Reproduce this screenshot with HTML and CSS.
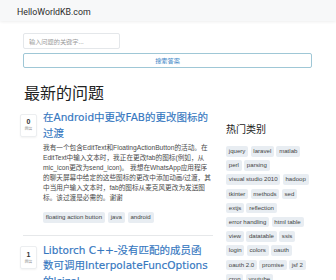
FILE: index.html
```html
<!DOCTYPE html>
<html lang="zh">
<head>
<meta charset="utf-8">
<title>HelloWorldKB.com</title>
<link rel="stylesheet" href="styles.css">
</head>
<body>
<nav class="navbar"><a class="brand" href="#">HelloWorldKB.com</a></nav>
<div class="container">
  <form class="search">
    <input class="search-input" type="text" placeholder="输入问题的关键字...">
    <button class="search-btn" type="button">搜索答案</button>
  </form>
  <h2 class="page-title">最新的问题</h2>
  <div class="layout">
    <main class="questions">
      <article class="question">
        <div class="votes"><span class="count">0</span><span class="label">回答</span></div>
        <div class="q-body">
          <a class="q-title" href="#">在Android中更改FAB的更改图标的过渡</a>
          <p class="excerpt">我有一个包含EditText和FloatingActionButton的活动。在EditText中输入文本时，我正在更改fab的图标(例如，从mic_icon更改为send_icon)。 我想在WhatsApp应用程序的聊天屏幕中给定的这些图标的更改中添加动画/过渡，其中当用户输入文本时，fab的图标从麦克风更改为发送图标。该过渡是必需的。谢谢</p>
          <div class="tags">
            <span class="tag">floating action button</span>
            <span class="tag">java</span>
            <span class="tag">android</span>
          </div>
        </div>
      </article>
      <hr class="sep">
      <article class="question">
        <div class="votes"><span class="count">1</span><span class="label">回答</span></div>
        <div class="q-body">
          <a class="q-title" href="#">Libtorch C++-没有匹配的成员函<br>数可调用InterpolateFuncOptions的'size'</a>
        </div>
      </article>
    </main>
    <aside class="sidebar">
      <h3 class="side-title">热门类别</h3>
      <div class="tags side-tags">
        <span class="tag">jquery</span><span class="tag">laravel</span><span class="tag">matlab</span>
        <span class="tag">perl</span><span class="tag">parsing</span>
        <span class="tag">visual studio 2010</span><span class="tag">hadoop</span>
        <span class="tag">tkinter</span><span class="tag">methods</span><span class="tag">sed</span>
        <span class="tag">extjs</span><span class="tag">reflection</span>
        <span class="tag">error handling</span><span class="tag">html table</span>
        <span class="tag">view</span><span class="tag">datatable</span><span class="tag">ssis</span>
        <span class="tag">login</span><span class="tag">colors</span><span class="tag">oauth</span>
        <span class="tag">oauth 2.0</span><span class="tag">promise</span><span class="tag">jsf 2</span>
        <span class="tag">cron</span><span class="tag">youtube</span><span class="tag">react router</span>
      </div>
    </aside>
  </div>
</div>
</body>
</html>
```

FILE: styles.css
```css
* { box-sizing: border-box; }

html, body {
  margin: 0;
  padding: 0;
  background: #fff;
  overflow: hidden;
}

body {
  font-family: "Liberation Sans", "Noto Sans CJK SC", sans-serif;
  color: #333;
}

.navbar {
  height: 21px;
  background: #f7f8f9;
  box-shadow: 0 1px 3px rgba(0, 0, 0, 0.07);
  padding-left: 17px;
  display: flex;
  align-items: center;
}

.brand {
  font-family: "Roboto", "Liberation Sans", sans-serif;
  font-size: 8.8px;
  color: #2b2b2b;
  text-decoration: none;
  margin-top: 2px;
}

.container {
  padding: 0 24px 0 20px;
}

.search {
  margin: 12px 0 0 3px;
  display: flex;
  flex-direction: column;
  align-items: flex-start;
}

.search-input {
  width: 97px;
  height: 16px;
  border: 1px solid #e4e7ea;
  border-radius: 2px;
  padding: 0 0 0 5px;
  font-family: "Noto Sans CJK SC", sans-serif;
  font-size: 6.2px;
  color: #555;
  outline: none;
}

.search-input::placeholder { color: #9a9a9a; }

.search-btn {
  margin-top: 4px;
  width: 100%;
  height: 15px;
  border: 1px solid #9fc7d6;
  border-radius: 2px;
  background: #fff;
  color: #3d86c6;
  font-family: "Noto Sans CJK SC", sans-serif;
  font-size: 6.2px;
  padding: 0;
}

.page-title {
  margin: 14px 0 0 4px;
  font-family: "Noto Sans CJK SC", sans-serif;
  font-weight: 400;
  font-size: 16px;
  line-height: 20px;
  color: #222;
}

.layout {
  display: grid;
  grid-template-columns: 193px 86px;
  column-gap: 13px;
  margin-top: 8px;
}

.question {
  display: flex;
  gap: 6px;
}

.votes {
  flex: 0 0 17px;
  height: 23px;
  margin-top: 3.5px;
  border: 1px solid #eceef0;
  border-radius: 2px;
  box-shadow: 0 1px 2px rgba(0, 0, 0, 0.05);
  display: flex;
  flex-direction: column;
  align-items: center;
  justify-content: center;
}

.count {
  font-family: "Liberation Sans", sans-serif;
  font-weight: 700;
  font-size: 7px;
  line-height: 8px;
  color: #333;
}

.label {
  font-family: "Noto Sans CJK SC", sans-serif;
  font-size: 3.8px;
  line-height: 6px;
  color: #888;
}

.q-body { min-width: 0; flex: 1; }

.q-title {
  display: block;
  font-family: "DejaVu Sans", "Noto Sans CJK SC", sans-serif;
  font-weight: 400;
  font-size: 10.5px;
  line-height: 15.5px;
  color: #3577bf;
  text-decoration: none;
  -webkit-text-stroke: 0.15px #3577bf;
}

.excerpt {
  margin: 2px 0 0;
  font-family: "Liberation Sans", "Noto Sans CJK SC", sans-serif;
  font-size: 6.65px;
  line-height: 10px;
  color: #4a4a4a;
}

.tags {
  display: flex;
  flex-wrap: wrap;
  gap: 3px;
  margin-top: 9px;
}

.tag {
  display: inline-block;
  height: 10.5px;
  line-height: 10.5px;
  padding: 0 2.8px;
  background: #e8edf2;
  border-radius: 2px;
  font-family: "Liberation Sans", sans-serif;
  font-size: 6.1px;
  color: #444;
  white-space: nowrap;
}

.sep {
  border: 0;
  border-top: 1px solid #e6e8ea;
  margin: 12px 0 7px 3px;
}

.sidebar {
  padding-top: 12px;
}

.side-title {
  margin: 0;
  font-family: "Noto Sans CJK SC", sans-serif;
  font-weight: 400;
  font-size: 10px;
  line-height: 13px;
  color: #222;
}

.side-tags {
  margin-top: 11px;
  column-gap: 2.3px;
  row-gap: 3.7px;
}

.side-tags .tag {
  font-size: 6.1px;
  padding: 0 2.8px;
}
```
